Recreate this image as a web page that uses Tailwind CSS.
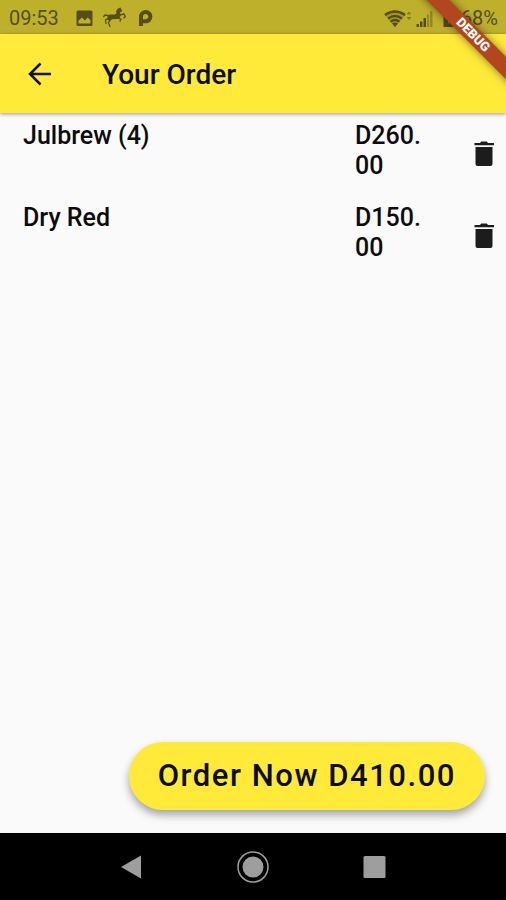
<!DOCTYPE html>
<html lang="en">
<head>
<meta charset="utf-8">
<meta name="viewport" content="width=device-width, initial-scale=1">
<title>Your Order</title>
<script src="https://cdn.jsdelivr.net/npm/@tailwindcss/browser@4"></script>
</head>
<body class="relative flex min-h-screen flex-col overflow-x-hidden bg-[#fafafa] font-['Roboto',sans-serif] text-[#0c0c0c]">
  <!-- Status bar -->
  <div class="flex h-[34px] items-center bg-[#bfb02c] pt-[2px] pr-2 pl-[9px] text-[#554e18]">
    <span class="text-[20px] leading-6">09:53</span>
    <svg class="ml-[17px] size-[17px]" viewBox="0 0 17 17" fill="currentColor" aria-hidden="true"><path fill-rule="evenodd" d="M2 .5h13a1.500 1.500 0 0 1 1.500 1.500v12.500a1.500 1.500 0 0 1-1.500 1.500H2A1.500 1.500 0 0 1 .5 14.500V2A1.500 1.500 0 0 1 2 .5ZM2.500 13.500h12v-3.200l-2.800-2.800-2.800 3-3-3-3.400 3.300v2.700Z"/></svg>
    <svg class="mb-[2px] ml-[10px] h-[21px] w-[23px]" viewBox="0 0 23 21" fill="currentColor" stroke="currentColor" stroke-linecap="round" stroke-linejoin="round" aria-hidden="true"><path stroke="none" d="M4.500 8.500C6 7 9 7.500 12 7.500l1.500-1.200c-1-2 .5-4.500 2.500-5.300L17.500.5 19 3.500 18.500 5l-1.200-.5c-.3 1.500.2 3 .2 4.500-.2 2-2 3-4 3l-4.500.3L7 14l-2.500-1z"/><path fill="none" stroke-width="1.300" d="M5 8.500 2 8 .7 9.500M5 11.500l-2.500 1.500.5 3.500M7 13l-1.500 3L7 19.500M17 8l4-1 1.300 2.500-1.500 1.500M14.500 11l3.500 1.200-1 2"/></svg>
    <svg class="ml-[12px] h-[18px] w-[15px]" viewBox="0 0 15 18" fill="none" stroke="currentColor" stroke-width="4" aria-hidden="true"><path d="M3 17V8a4.700 4.700 0 1 1 4.500 4.300H5"/></svg>
    <svg class="ml-auto h-[17px] w-[28px]" viewBox="0 0 28 17" fill="none" stroke="currentColor" aria-hidden="true"><path fill="currentColor" fill-opacity=".25" stroke="none" d="M0 4.500q11-8 22 0L11 17Z"/><path stroke-width="2.400" d="M1 5q10-7 20 0M4 8.500q7-5 14 0M6.500 11.700q4.500-3.200 9 0"/><path fill="currentColor" stroke="none" d="M8 13.500q3-1.800 6 0L11 17Z"/><path stroke-width="1" opacity=".6" d="m23.500 4 1.500-2 1.500 2ZM23.500 7.500l1.500 2 1.500-2Z"/></svg>
    <svg class="ml-[4px] h-[17px] w-[17px]" viewBox="0 0 17 17" fill="currentColor" aria-hidden="true"><path d="M.5 14H3v3H.5zM4 11.500h2.500V17H4zM7.500 8H10v9H7.500z"/><path opacity=".4" d="M11 4.500h2V17h-2zM14 1h2.500v16H14z"/></svg>
    <svg class="ml-[10px] h-[17px] w-[12px]" viewBox="0 0 12 17" fill="currentColor" aria-hidden="true"><path fill-rule="evenodd" d="M4 0h4v2h3.500v15H.5V2H4V0Zm3 4L3 10h2.500v4L9.500 8H7V4Z"/></svg>
    <span class="ml-[6px] text-[20px] leading-6">68%</span>
  </div>

  <!-- App bar -->
  <header class="relative flex h-[79px] items-center bg-[#ffea3a] pl-[26px] shadow-[0_1px_4px_rgba(0,0,0,0.4)]">
    <button type="button" aria-label="Back" class="flex size-7 items-center justify-center">
      <svg class="size-7" viewBox="0 0 28 28" fill="none" stroke="#111" stroke-width="2.500" aria-hidden="true"><path d="M25 14H4.500M14.500 3.500 4 14l10.500 10.500"/></svg>
    </button>
    <h1 class="ml-12 pt-[2px] text-[28px] leading-8 font-medium">Your Order</h1>
  </header>

  <!-- Order lines -->
  <main class="flex flex-1 flex-col">
    <ul>
      <li class="flex h-[82px] items-center pr-2 pl-[23px] text-[25px] leading-[30px] font-medium">
        <span class="flex-1 self-start pt-2">Julbrew (4)</span>
        <span class="w-[72px] self-start pt-2 break-all">D260.00</span>
        <button type="button" aria-label="Remove Julbrew" class="ml-[43px] flex size-7 items-center justify-center">
          <svg class="size-7" viewBox="0 0 28 28" fill="#1c1c1c" aria-hidden="true"><path d="M4.500 3H10l1.200-1.500h5.600L18 3h6v2.300H4.500zM5.500 7h17v17a2 2 0 0 1-2 2h-13a2 2 0 0 1-2-2z"/></svg>
        </button>
      </li>
      <li class="flex h-[82px] items-center pr-2 pl-[23px] text-[25px] leading-[30px] font-medium">
        <span class="flex-1 self-start pt-2">Dry Red</span>
        <span class="w-[72px] self-start pt-2 break-all">D150.00</span>
        <button type="button" aria-label="Remove Dry Red" class="ml-[43px] flex size-7 items-center justify-center">
          <svg class="size-7" viewBox="0 0 28 28" fill="#1c1c1c" aria-hidden="true"><path d="M4.500 3H10l1.200-1.500h5.600L18 3h6v2.300H4.500zM5.500 7h17v17a2 2 0 0 1-2 2h-13a2 2 0 0 1-2-2z"/></svg>
        </button>
      </li>
    </ul>
    <button type="button" class="mt-auto mr-[21px] mb-[23px] self-end rounded-full bg-[#ffea3a] px-[29px] py-4 text-[31px] leading-9 font-medium tracking-wider shadow-[0_5px_8px_rgba(0,0,0,0.35)]">Order Now D410.00</button>
  </main>

  <!-- System navigation -->
  <nav aria-label="System" class="flex h-[67px] items-center justify-center gap-[89px] bg-black text-[#9e9e9e]">
    <button type="button" aria-label="Back" class="flex size-8 items-center justify-center"><svg class="size-8" viewBox="0 0 32 32" fill="currentColor" aria-hidden="true"><path d="M5 16 25 4.500v23z"/></svg></button>
    <button type="button" aria-label="Home" class="flex size-8 items-center justify-center"><svg class="size-8" viewBox="0 0 32 32" fill="currentColor" aria-hidden="true"><circle cx="16" cy="16" r="10.500"/><circle cx="16" cy="16" r="15" fill="none" stroke="currentColor" stroke-width="1.500"/></svg></button>
    <button type="button" aria-label="Recent apps" class="flex size-8 items-center justify-center"><svg class="size-8" viewBox="0 0 32 32" fill="currentColor" aria-hidden="true"><rect x="5.500" y="5" width="22" height="22" rx="1.500"/></svg></button>
  </nav>

  <!-- Corner ribbon -->
  <div class="pointer-events-none absolute top-0 right-0 size-24 overflow-hidden">
    <div class="absolute top-[27px] -right-[37px] w-[140px] rotate-45 bg-[#b3461f] text-center text-[13px] leading-4 font-black text-white shadow-[0_0_8px_rgba(0,0,0,0.5)]">DEBUG</div>
  </div>
</body>
</html>
